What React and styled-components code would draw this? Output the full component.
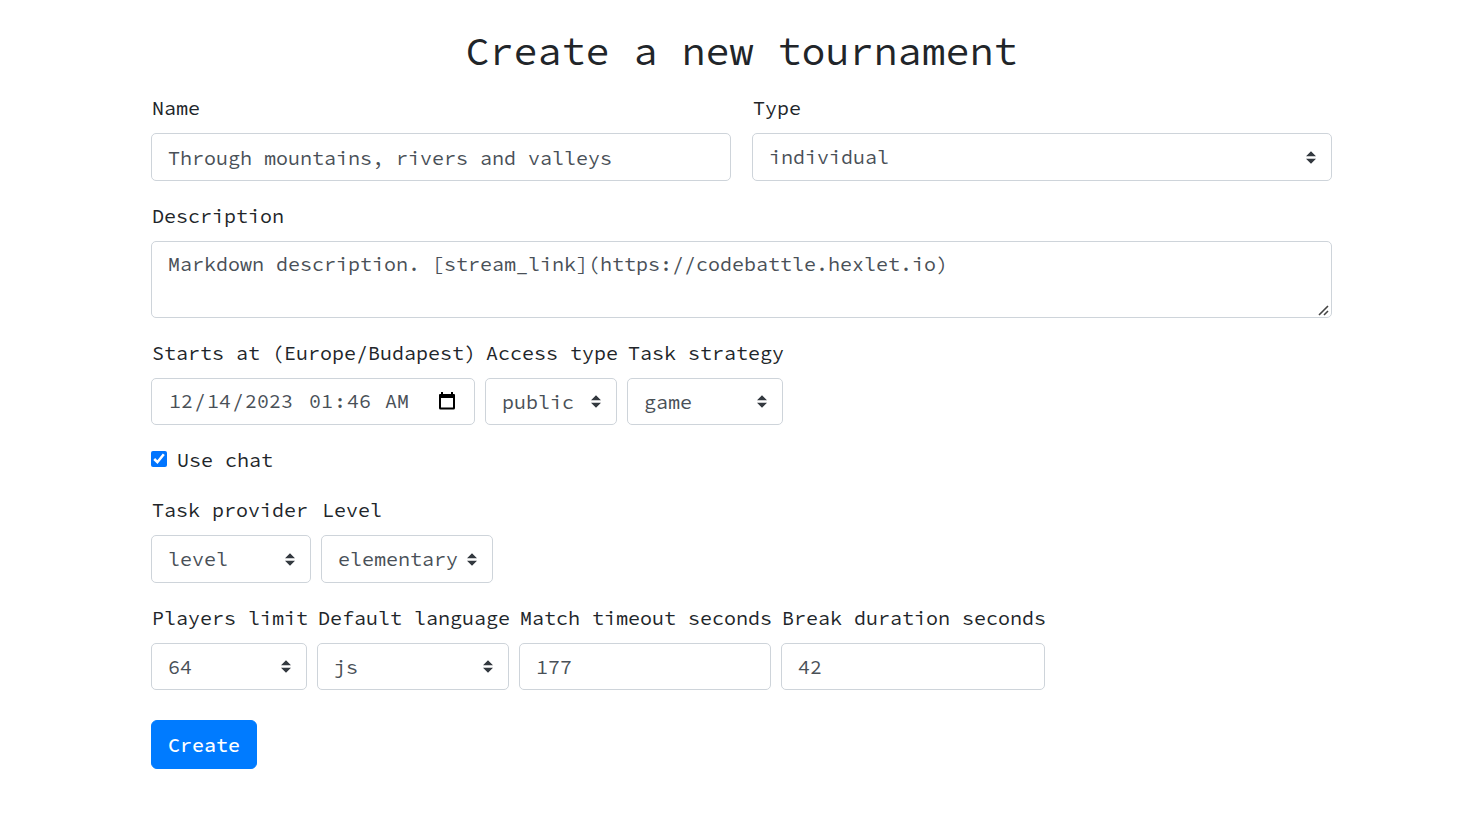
import React, { useRef } from 'react';
import styled, { createGlobalStyle, css } from 'styled-components';

const GlobalStyle = createGlobalStyle`
  *, *::before, *::after { box-sizing: border-box; }
  body {
    margin: 0;
    padding-left: 6px;
    background: #fff;
    color: #212529;
    font: 400 20px/30px "Source Code Pro", "Liberation Mono", monospace;
  }
`;

const Page = styled.main`
  max-width: 1181px;
  margin: 0 auto;
  padding: 27px 0 48px;
`;

const Title = styled.h1`
  margin: 0 0 18px;
  font-size: 40px;
  line-height: 48px;
  font-weight: 400;
  text-align: center;
`;

const Form = styled.form`
  display: flex;
  flex-direction: column;
  gap: 20px;
`;

const Row = styled.div`
  --control-height: ${(p) => (p.$short ? '47px' : '48px')};
  display: flex;
  gap: ${(p) => (p.$wide ? '21px' : '10px')};
`;

const FieldBox = styled.div`
  display: flex;
  flex-direction: column;
  gap: 10px;
  min-width: 0;
  flex: ${(p) => (p.$grow ? '1 1 0' : '0 0 auto')};
`;

const Label = styled.label`
  margin-right: -1px;
  padding-left: 1px;
  white-space: nowrap;
`;

const control = css`
  display: block;
  margin: 0;
  border: 1px solid #ced4da;
  border-radius: 5px;
  background-color: #fff;
  color: #495057;
  font: inherit;

  &:focus {
    outline: 0;
    border-color: #80bdff;
    box-shadow: 0 0 0 4px rgba(0, 123, 255, 0.25);
  }
`;

const Input = styled.input`
  ${control}
  width: 0;
  min-width: 100%;
  height: var(--control-height);
  padding: 7px 16px;
`;

const grip =
  "url(\"data:image/svg+xml,%3csvg xmlns='http://www.w3.org/2000/svg' width='15' height='15' viewBox='0 0 15 15'%3e%3cpath fill='none' stroke='%23444' stroke-width='1.6' d='M3 13L12 4M8 13L12 9'/%3e%3c/svg%3e\")";

const TextArea = styled.textarea`
  ${control}
  width: 100%;
  height: 77px;
  padding: 7px 16px;
  resize: vertical;

  &::-webkit-resizer {
    background: ${grip} right bottom / 15px 15px no-repeat;
  }
`;

const DateTimeBox = styled.div`
  ${control}
  display: flex;
  align-items: center;
  gap: 13px;
  height: var(--control-height);
  padding: 0 18px 1px 16px;
`;

const DateTimePart = styled.input`
  flex: none;
  width: ${(p) => (p.type === 'date' ? '127px' : '104px')};
  margin: 0;
  padding: 0;
  border: 0;
  background: transparent;
  color: inherit;
  font: inherit;

  &:focus { outline: 0; }
  &::-webkit-calendar-picker-indicator { display: none; }
`;

const PickerButton = styled.button`
  display: flex;
  margin: 0 0 0 auto;
  padding: 0;
  border: 0;
  background: none;
  color: #000;
  cursor: pointer;
`;

const arrows =
  "url(\"data:image/svg+xml,%3csvg xmlns='http://www.w3.org/2000/svg' width='4' height='5' viewBox='0 0 4 5'%3e%3cpath fill='%23343a40' d='M2 0L0 2h4zm0 5L0 3h4z'/%3e%3c/svg%3e\")";

const Select = styled.select`
  ${control}
  min-width: 100%;
  height: var(--control-height);
  padding: 7px 34px 7px 16px;
  appearance: none;
  background-image: ${arrows};
  background-repeat: no-repeat;
  background-position: right 15px center;
  background-size: 10px 13px;
`;

const CheckRow = styled.div`
  display: flex;
  align-items: center;
  gap: 9px;
`;

const Checkbox = styled.input`
  width: 16px;
  height: 16px;
  margin: 0 0 2px;
  accent-color: #0075ff;
`;

const Submit = styled.button`
  align-self: flex-start;
  height: 49px;
  margin-top: 10px;
  padding: 0 16px;
  border: 1px solid #007bff;
  border-radius: 6px;
  background: #007bff;
  color: #fff;
  font: inherit;
  font-weight: 500;
  cursor: pointer;

  &:hover { background: #0069d9; border-color: #0062cc; }
`;

function Field({ id, label, grow, children }) {
  return (
    <FieldBox $grow={grow}>
      <Label htmlFor={id}>{label}</Label>
      {children}
    </FieldBox>
  );
}

function SelectField({ id, label, options, value, grow }) {
  return (
    <Field id={id} label={label} grow={grow}>
      <Select id={id} name={id} defaultValue={value}>
        {options.map((option) => (
          <option key={option}>{option}</option>
        ))}
      </Select>
    </Field>
  );
}

function DateTimeField({ id, label, date, time }) {
  const dateRef = useRef(null);
  return (
    <Field id={id} label={label}>
      <DateTimeBox>
        <DateTimePart ref={dateRef} id={id} name={`${id}_date`} type="date" defaultValue={date} />
        <DateTimePart name={`${id}_time`} type="time" defaultValue={time} aria-label="Start time" />
        <PickerButton type="button" aria-label="Show date picker" onClick={() => dateRef.current.showPicker()}>
          <svg width="18" height="20" viewBox="0 0 18 20" fill="currentColor" aria-hidden="true">
            <path fillRule="evenodd" d="M3 1h2v2h8V1h2v2h1a1 1 0 0 1 1 1v13a1.500 1.500 0 0 1-1.500 1.500h-13A1.500 1.500 0 0 1 1 17V4a1 1 0 0 1 1-1h1zM3 7v9.500h12V7z" />
          </svg>
        </PickerButton>
      </DateTimeBox>
    </Field>
  );
}

export default function App() {
  return (
    <>
      <GlobalStyle />
      <Page>
        <Title>Create a new tournament</Title>
        <Form onSubmit={(event) => event.preventDefault()}>
          <Row $wide>
            <Field id="name" label="Name" grow>
              <Input id="name" name="name" type="text" defaultValue="Through mountains, rivers and valleys" />
            </Field>
            <SelectField id="type" label="Type" grow value="individual" options={['individual', 'team']} />
          </Row>

          <Field id="description" label="Description">
            <TextArea
              id="description"
              name="description"
              spellCheck={false}
              defaultValue="Markdown description. [stream_link](https://codebattle.hexlet.io)"
            />
          </Field>

          <Row $short>
            <DateTimeField id="starts_at" label="Starts at (Europe/Budapest)" date="2023-12-14" time="01:46" />
            <SelectField id="access_type" label="Access type" value="public" options={['public', 'token']} />
            <SelectField id="task_strategy" label="Task strategy" value="game" options={['game', 'round']} />
          </Row>

          <CheckRow>
            <Checkbox id="use_chat" name="use_chat" type="checkbox" defaultChecked />
            <Label htmlFor="use_chat">Use chat</Label>
          </CheckRow>

          <Row>
            <SelectField id="task_provider" label="Task provider" value="level" options={['level', 'task_pack']} />
            <SelectField id="level" label="Level" value="elementary" options={['elementary', 'easy', 'medium', 'hard']} />
          </Row>

          <Row $short>
            <SelectField id="players_limit" label="Players limit" value="64" options={['2', '4', '8', '16', '32', '64', '128']} />
            <SelectField id="default_language" label="Default language" value="js" options={['js', 'ts', 'ruby', 'python', 'php']} />
            <Field id="match_timeout" label="Match timeout seconds">
              <Input id="match_timeout" name="match_timeout" type="number" defaultValue="177" />
            </Field>
            <Field id="break_duration" label="Break duration seconds">
              <Input id="break_duration" name="break_duration" type="number" defaultValue="42" />
            </Field>
          </Row>

          <Submit type="submit">Create</Submit>
        </Form>
      </Page>
    </>
  );
}
